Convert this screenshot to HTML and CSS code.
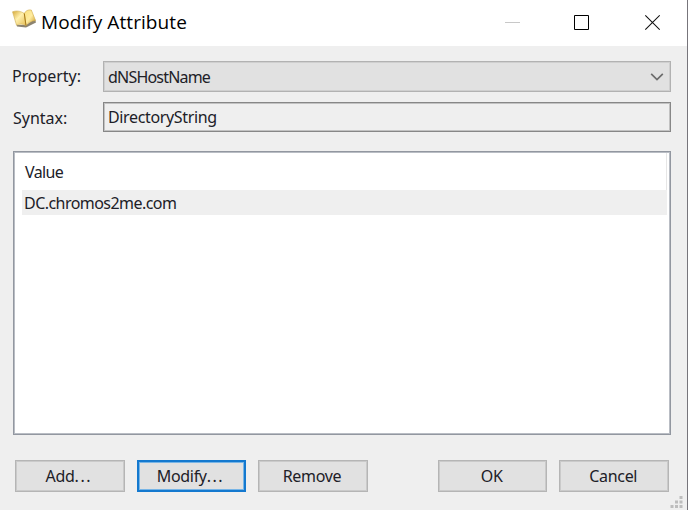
FILE: index.html
```html
<!DOCTYPE html>
<html lang="en">
<head>
<meta charset="utf-8">
<title>Modify Attribute</title>
<link rel="stylesheet" href="styles.css">
</head>
<body>
<div class="window">
  <header class="titlebar">
    <svg class="book" width="26" height="22" viewBox="0 0 26 22">
      <defs>
        <linearGradient id="left" x1="0" y1="0" x2="1" y2="1"><stop offset="0" stop-color="#d5a736"/><stop offset=".45" stop-color="#fff0ae"/><stop offset="1" stop-color="#e5bd53"/></linearGradient>
        <linearGradient id="right" x1="0" y1="0" x2="1" y2="1"><stop offset="0" stop-color="#f9df7c"/><stop offset=".5" stop-color="#ffeca0"/><stop offset="1" stop-color="#c99622"/></linearGradient>
      </defs>
      <path d="M2.500 5 6 18.500 15 19.500 25 14.500 24 11 15 17 7 17Z" fill="#8c8370"/>
      <path d="M1.500 3.800C6 2.200 10 3.200 13.300 5.500L15 17.500C11.500 15.700 8.500 15.800 5.500 17.200Z" fill="url(#left)" stroke="#d2b25c" stroke-width=".6"/>
      <path d="M13.300 5.500C14.500 2.800 17 1.500 20.300 2L24.500 12.500C20 13 17.500 14.500 15 17.500Z" fill="url(#right)" stroke="#cfa743" stroke-width=".6"/>
      <path d="M13.300 5.500 15 17.500" stroke="#a77918" stroke-width="1"/>
    </svg>
    <h1 class="title">Modify Attribute</h1>
    <svg class="controls" width="160" height="20" viewBox="0 0 160 20" fill="none">
      <path d="M5 10.500H20" stroke="#c8c8c8"/>
      <path d="M74.500 3.500H88.500V17.500H74.500Z" stroke="#000"/>
      <path d="M145.300 3.300 159.700 17.700M159.700 3.300 145.300 17.700" stroke="#111" stroke-width="1.100"/>
    </svg>
  </header>
  <main class="content">
    <div class="field">
      <span class="label"><span class="t-property">Property:</span></span>
      <div class="combo"><span class="t-name">dNSHostName</span>
        <svg width="14" height="10" viewBox="0 0 14 10" fill="none"><path d="M1.200 1.800 7 7.500 12.800 1.800" stroke="#6c6c6c" stroke-width="1.700"/></svg>
      </div>
    </div>
    <div class="field syntax">
      <span class="label">Syntax:</span>
      <div class="readonly"><span class="t-string">DirectoryString</span></div>
    </div>
    <section class="list">
      <div class="head"><span class="t-value">Value</span></div>
      <div class="row"><span class="t-domain">DC.chromos2me.com</span></div>
    </section>
    <footer class="actions">
      <button class="btn">Add<span class="dots">...</span></button>
      <button class="btn active">Modify<span class="dots">...</span></button>
      <button class="btn">Remove</button>
      <button class="btn ok">OK</button>
      <button class="btn">Cancel</button>
    </footer>
  </main>
  <svg class="grip" width="13" height="13" viewBox="0 0 13 13" fill="#bdbdbd"><path d="M9.500 0h3v3h-3zM5 4.500h3v3H5zM9.500 4.500h3v3h-3zM.5 9h3v3h-3zM5 9h3v3H5zM9.500 9h3v3h-3z"/></svg>
</div>
</body>
</html>
```
FILE: styles.css
```css
* { box-sizing: border-box; }
body { margin: 0; overflow: hidden; }
.window {
  position: relative;
  width: 688px;
  height: 510px;
  background: #efefef;
  border-right: 1px solid #77757b;
  font: 16px/20px "Noto Sans", sans-serif;
  color: #202027;
}
.titlebar {
  display: flex;
  height: 46px;
  padding: 0 27px 0 11px;
  background: #fff;
}
.book { margin-top: 8px; }
.title {
  margin: 10px auto 0 4px;
  font: 19px/24px "Open Sans", sans-serif;
  letter-spacing: 0.080px;
  color: #000;
  white-space: nowrap;
}
.controls { margin-top: 12px; }
.content { padding: 15px 16px 0 13px; }
.field { display: flex; height: 31px; }
.label { width: 90px; padding-top: 5px; white-space: nowrap; }
.t-property { margin-left: -1px; letter-spacing: -0.050px; }
.t-name { letter-spacing: -0.800px; }
.t-string { letter-spacing: -0.350px; }
.t-value { letter-spacing: -0.600px; }
.t-domain { margin-left: -1px; letter-spacing: -0.550px; }
.combo, .readonly {
  display: flex;
  flex: 1;
  justify-content: space-between;
  align-items: center;
  padding: 0 6px 0 4px;
  border: 1px solid #b2b2b2;
  background: #e1e1e1;
  box-shadow: inset 0 0 0 1px #cfcfcf;
}
.combo { padding-top: 1px; }
.syntax { height: 30px; margin-top: 10px; }
.syntax .label { padding-top: 6px; }
.readonly {
  border-color: #878787;
  background: #efefef;
  box-shadow: inset 0 0 0 1px #c2c2c2;
}
.list {
  height: 284px;
  margin-top: 19px;
  padding: 1px 3px 2px 8px;
  border: 1px solid #9297a0;
  background: #fff;
  box-shadow: inset 0 0 0 1px #b9bdc4;
}
.head { height: 37px; padding: 9px 0 0 3px; border-right: 1px solid #e6e6e6; }
.row { height: 25px; padding: 3px 0 0 3px; background: #efefef; }
.actions { display: flex; gap: 12px; margin: 25px 2px 0 2px; }
.btn {
  width: 109.600px;
  height: 32px;
  padding: 0 2px 0 0;
  border: 1px solid #b5b5b5;
  background: #e1e1e1;
  box-shadow: inset 0 0 0 1px #cacaca;
  color: inherit;
  font: inherit;
  letter-spacing: -0.300px;
}
.dots { letter-spacing: 1.500px; }
.btn.active { border: 2px solid #1479cf; box-shadow: inset 0 0 0 1px #78b5e6; }
.btn.ok { margin-left: auto; }
.grip { position: absolute; right: 4px; bottom: 1px; }
```
